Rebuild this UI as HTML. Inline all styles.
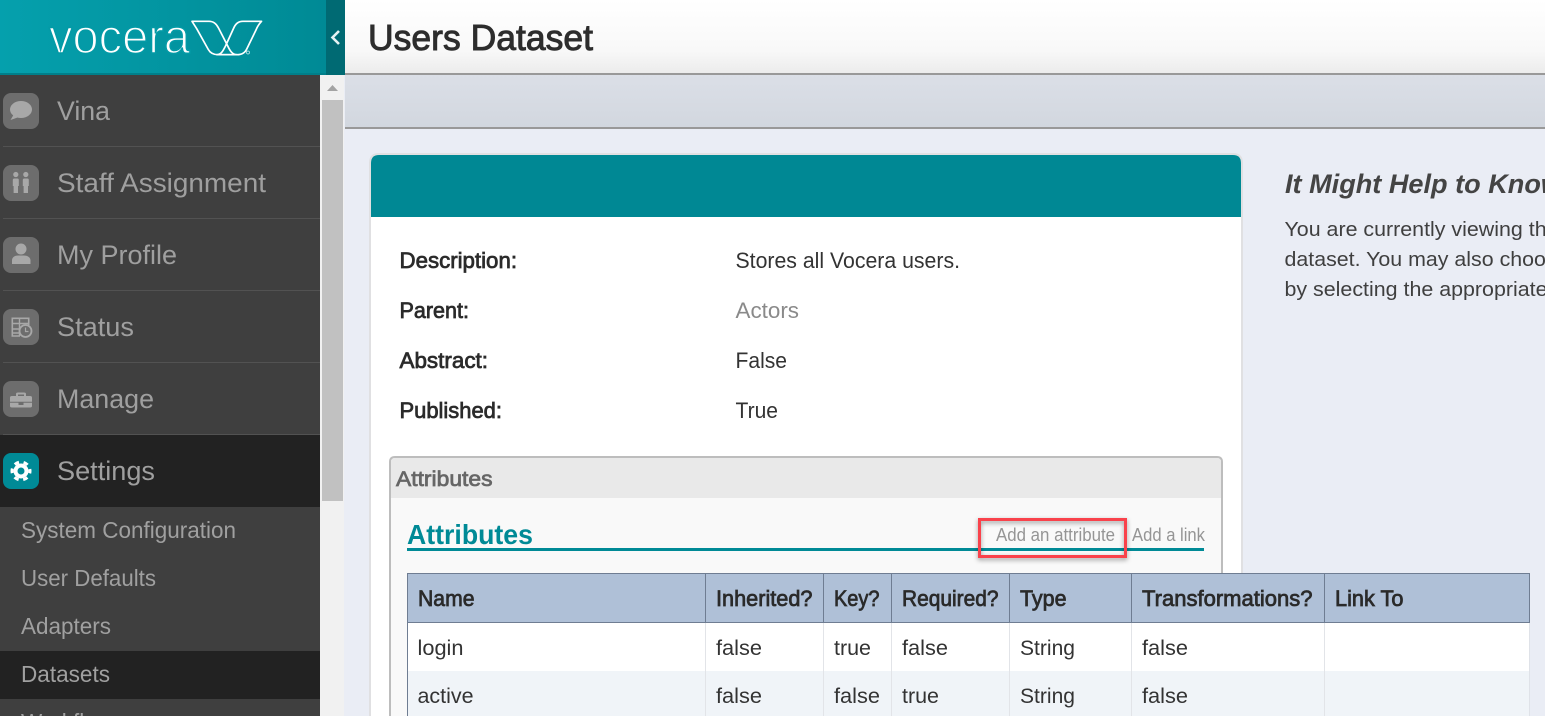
<!DOCTYPE html>
<html lang="en"><head><meta charset="utf-8"><title>Users Dataset</title>
<style>
html,body{margin:0;padding:0;width:1545px;height:716px;overflow:hidden;background:#eaedf5}
svg{display:block;position:absolute;left:0;top:0}
text{font-family:"Liberation Sans",sans-serif}
.nav{font-size:27px;fill:#9f9f9f}
.sub{font-size:23px;fill:#a0a0a0}
.lab{font-size:22px;fill:#2b2b2b;stroke:#2b2b2b;stroke-width:.75}
.val{font-size:22px;fill:#333}
.th{font-size:22px;fill:#2a2a2a;stroke:#2a2a2a;stroke-width:.75}
.td{font-size:21.5px;fill:#333}
.ln{font-size:18px;fill:#959595}
.p{font-size:20.5px;fill:#3f3f3f}
</style></head><body>
<svg width="1545" height="716" viewBox="0 0 1545 716" xmlns="http://www.w3.org/2000/svg">
<defs>
<linearGradient id="t" x1="0" x2="1" y1="0" y2="0"><stop offset="0" stop-color="#05a0ad"/><stop offset="1" stop-color="#008a95"/></linearGradient>
<linearGradient id="h" x1="0" x2="0" y1="0" y2="1"><stop offset="0" stop-color="#fff"/><stop offset=".7" stop-color="#f8f8f8"/><stop offset="1" stop-color="#ececec"/></linearGradient>
<linearGradient id="b" x1="0" x2="0" y1="0" y2="1"><stop offset="0" stop-color="#dbdfe7"/><stop offset="1" stop-color="#d2d7df"/></linearGradient>
<filter id="s" x="-10%" y="-30%" width="120%" height="170%"><feDropShadow dx="0" dy="2" stdDeviation="2.5" flood-color="#000" flood-opacity=".4"/></filter>
</defs>

<!-- main background -->
<rect width="1545" height="716" fill="#eaedf5"/>
<rect x="345" y="0" width="1200" height="73" fill="url(#h)"/>
<rect x="345" y="73" width="1200" height="2" fill="#999"/>
<rect x="345" y="75" width="1200" height="52" fill="url(#b)"/>
<rect x="345" y="127" width="1200" height="2" fill="#999"/>
<text x="368" y="50" font-size="36" fill="#2d2d2d" stroke="#2d2d2d" stroke-width=".95" textLength="225" lengthAdjust="spacingAndGlyphs">Users Dataset</text>

<!-- sidebar -->
<rect x="0" y="75" width="320" height="641" fill="#3f3f3f"/>
<rect x="0" y="435" width="320" height="72" fill="#222"/>
<rect x="0" y="651" width="320" height="48" fill="#222"/>
<g fill="#525252">
<rect x="3" y="146" width="317" height="1"/><rect x="3" y="218" width="317" height="1"/><rect x="3" y="290" width="317" height="1"/><rect x="3" y="362" width="317" height="1"/><rect x="3" y="434" width="317" height="1"/>
</g>
<!-- scrollbar -->
<rect x="320" y="75" width="25" height="641" fill="#f1f1f1"/>
<rect x="344" y="75" width="1" height="641" fill="#eaedf5"/>
<rect x="322" y="100" width="21" height="401" fill="#c1c1c1"/>
<path d="M327 91L332.500 85 338 91Z" fill="#a3a3a3"/>

<!-- header logo -->
<rect x="0" y="0" width="326" height="73" fill="url(#t)"/>
<rect x="0" y="73" width="345" height="2" fill="#007f8a"/>
<rect x="326" y="0" width="19" height="75" fill="#006a73"/>
<path d="M339 31L332.500 37.500 339 44" fill="none" stroke="#e6f2f3" stroke-width="2.600"/>
<text x="49" y="53" font-size="48" fill="#fff" stroke="#049aa6" stroke-width="1.600" textLength="141" lengthAdjust="spacingAndGlyphs">vocera</text>
<g fill="none" stroke="#fff" stroke-width="1.700" stroke-linejoin="round">
<path d="M192 21.300H209C214 21.300 216.500 24 218.500 28L227.500 45.500C230 51 232.500 54.700 237 54.700H218C214 54.700 210.500 53.500 208.300 49.500L196.700 28.700Z"/>
<path d="M261.500 21.300H243C238 21.300 235.500 24 233.500 28.500L225.500 46C223 51 221 54.700 217 54.700H237C242 54.700 245 53 247 48.500L256 30C257.500 26 259.500 23.500 261.500 21.300Z"/>
</g>
<circle cx="248" cy="52.500" r="1.500" fill="none" stroke="#cdeaec" stroke-width=".7"/>

<!-- nav icons -->
<g fill="#6d6d6d">
<rect x="3" y="93" width="36" height="36" rx="8"/><rect x="3" y="165" width="36" height="36" rx="8"/><rect x="3" y="237" width="36" height="36" rx="8"/><rect x="3" y="309" width="36" height="36" rx="8"/><rect x="3" y="381" width="36" height="36" rx="8"/>
</g>
<rect x="3" y="453" width="36" height="36" rx="8" fill="#008a96"/>
<g fill="#a8a8a8">
<ellipse cx="21" cy="109.500" rx="11" ry="8.500"/><path d="M14 114L10.500 120 19 117Z"/>
<circle cx="15.800" cy="174.500" r="2.600"/><circle cx="25.800" cy="174.500" r="2.600"/>
<path d="M12.800 180Q12.800 178.500 14.300 178.500H17.300Q18.800 178.500 18.800 180V186H18V193H13.600V186H12.800Z"/><path d="M22.800 180Q22.800 178.500 24.300 178.500H27.300Q28.800 178.500 28.800 180V186H28V193H23.600V186H22.800Z"/>
<circle cx="21" cy="249" r="5.500"/><path d="M12 264V260.500C12 257 15 255.500 18 255.500H24C27 255.500 30.500 257 30.500 260.500V264Z"/>
<path d="M10 397.500Q10 396 12 396H16V394Q16 392.500 18 392.500H24Q26 392.500 26 394V396H30Q32 396 32 397.500V401.800H10ZM18 396H24V394.500H18ZM10 402.800H18.500V405H23.500V402.800H32V406Q32 407.500 30 407.500H12Q10 407.500 10 406Z" fill-rule="evenodd"/>
</g>
<!-- status icon -->
<g fill="none" stroke="#a8a8a8">
<path d="M20 336H12.300V318.300H28.700V325" stroke-width="1.600"/>
<path d="M12.300 323.500H28.700M12.300 329H20M12.300 333H19M19.500 318.300V336" stroke-width="1.400"/>
<circle cx="25.500" cy="331" r="6" stroke-width="1.800"/>
<path d="M25.500 327.500V331.500H28.500" stroke-width="1.200"/>
</g>
<g>
<circle cx="21" cy="471" r="7.500" fill="#fff"/>
<circle cx="21" cy="471" r="9" fill="none" stroke="#fff" stroke-width="3" stroke-dasharray="4.712 4.712" stroke-dashoffset="2.356"/>
<circle cx="21" cy="471" r="3.500" fill="#008a96"/>
</g>

<!-- nav text -->
<text class="nav" x="57" y="120" textLength="53" lengthAdjust="spacingAndGlyphs">Vina</text>
<text class="nav" x="57" y="192" textLength="209" lengthAdjust="spacingAndGlyphs">Staff Assignment</text>
<text class="nav" x="57" y="264" textLength="120" lengthAdjust="spacingAndGlyphs">My Profile</text>
<text class="nav" x="57" y="336" textLength="77" lengthAdjust="spacingAndGlyphs">Status</text>
<text class="nav" x="57" y="408" textLength="97" lengthAdjust="spacingAndGlyphs">Manage</text>
<text class="nav" x="57" y="480" textLength="98" lengthAdjust="spacingAndGlyphs">Settings</text>
<text class="sub" x="21" y="538" textLength="215" lengthAdjust="spacingAndGlyphs">System Configuration</text>
<text class="sub" x="21" y="586" textLength="135" lengthAdjust="spacingAndGlyphs">User Defaults</text>
<text class="sub" x="21" y="634" textLength="90" lengthAdjust="spacingAndGlyphs">Adapters</text>
<text class="sub" x="21" y="682" textLength="89" lengthAdjust="spacingAndGlyphs">Datasets</text>
<text class="sub" x="21" y="730" textLength="92" lengthAdjust="spacingAndGlyphs">Workflow</text>

<!-- card -->
<path d="M370 730V163Q370 154 379 154H1233Q1242 154 1242 163V730Z" fill="#fff" stroke="#e0e0e2" stroke-width="2"/>
<path d="M371 217V163Q371 155 379 155H1233Q1241 155 1241 163V217Z" fill="#008894"/>
<text class="lab" x="399.500" y="268" textLength="117.500" lengthAdjust="spacingAndGlyphs">Description:</text>
<text class="lab" x="399.500" y="318" textLength="69.500" lengthAdjust="spacingAndGlyphs">Parent:</text>
<text class="lab" x="399.500" y="368" textLength="88.500" lengthAdjust="spacingAndGlyphs">Abstract:</text>
<text class="lab" x="399.500" y="418" textLength="102.500" lengthAdjust="spacingAndGlyphs">Published:</text>
<text class="val" x="735.500" y="268" textLength="224.500" lengthAdjust="spacingAndGlyphs">Stores all Vocera users.</text>
<text class="val" x="735.500" y="318" style="fill:#8a8a8a" textLength="63.500" lengthAdjust="spacingAndGlyphs">Actors</text>
<text class="val" x="735.500" y="368" textLength="51.500" lengthAdjust="spacingAndGlyphs">False</text>
<text class="val" x="735.500" y="418" textLength="42.500" lengthAdjust="spacingAndGlyphs">True</text>

<!-- panel -->
<path d="M390 730V462Q390 457 395 457H1217Q1222 457 1222 462V730Z" fill="#f9f9f9" stroke="#bdbdbd" stroke-width="2"/>
<path d="M391 498V462Q391 458 395 458H1217Q1221 458 1221 462V498Z" fill="#e9e9e9"/>
<text x="396" y="486" font-size="21.500" fill="#666" stroke="#666" stroke-width=".75" textLength="96.500" lengthAdjust="spacingAndGlyphs">Attributes</text>
<text x="407" y="544" font-size="28" font-weight="bold" fill="#008a96" textLength="126" lengthAdjust="spacingAndGlyphs">Attributes</text>
<rect x="407" y="548" width="797" height="3" fill="#008a96"/>
<text class="ln" x="996" y="541" textLength="119" lengthAdjust="spacingAndGlyphs">Add an attribute</text>
<text class="ln" x="1132" y="541" textLength="73" lengthAdjust="spacingAndGlyphs">Add a link</text>
<rect x="979.500" y="519.500" width="146" height="37" fill="none" stroke="#f9424b" stroke-width="3" filter="url(#s)"/>

<!-- table -->
<rect x="407" y="573" width="1123" height="143" fill="#fff"/>
<rect x="408" y="574" width="1121" height="48" fill="#afc0d7"/>
<rect x="408" y="671" width="1121" height="45" fill="#f0f4f8"/>
<rect x="407" y="573" width="1123" height="1" fill="#6f7d92"/>
<rect x="407" y="622" width="1123" height="1" fill="#6f7d92"/>
<rect x="407" y="573" width="1" height="143" fill="#6f7d92"/>
<rect x="1529" y="573" width="1" height="50" fill="#6f7d92"/>
<rect x="1529" y="623" width="1" height="93" fill="#dfe2e8"/>
<g fill="#6f7d92"><rect x="705" y="574" width="1" height="48"/><rect x="823" y="574" width="1" height="48"/><rect x="891" y="574" width="1" height="48"/><rect x="1009" y="574" width="1" height="48"/><rect x="1131" y="574" width="1" height="48"/><rect x="1324" y="574" width="1" height="48"/></g>
<g fill="#e2e4e8"><rect x="705" y="623" width="1" height="93"/><rect x="823" y="623" width="1" height="93"/><rect x="891" y="623" width="1" height="93"/><rect x="1009" y="623" width="1" height="93"/><rect x="1131" y="623" width="1" height="93"/><rect x="1324" y="623" width="1" height="93"/></g>
<text class="th" x="418" y="606" textLength="56.500" lengthAdjust="spacingAndGlyphs">Name</text>
<text class="th" x="716" y="606" textLength="96.500" lengthAdjust="spacingAndGlyphs">Inherited?</text>
<text class="th" x="834" y="606" textLength="45.500" lengthAdjust="spacingAndGlyphs">Key?</text>
<text class="th" x="902" y="606" textLength="96.500" lengthAdjust="spacingAndGlyphs">Required?</text>
<text class="th" x="1020" y="606" textLength="46.500" lengthAdjust="spacingAndGlyphs">Type</text>
<text class="th" x="1142" y="606" textLength="170.500" lengthAdjust="spacingAndGlyphs">Transformations?</text>
<text class="th" x="1335" y="606" textLength="68.500" lengthAdjust="spacingAndGlyphs">Link To</text>
<text class="td" x="417.500" y="655" textLength="46" lengthAdjust="spacingAndGlyphs">login</text>
<text class="td" x="716" y="655" textLength="46" lengthAdjust="spacingAndGlyphs">false</text>
<text class="td" x="834" y="655" textLength="37" lengthAdjust="spacingAndGlyphs">true</text>
<text class="td" x="902" y="655" textLength="46" lengthAdjust="spacingAndGlyphs">false</text>
<text class="td" x="1020" y="655" textLength="55" lengthAdjust="spacingAndGlyphs">String</text>
<text class="td" x="1142" y="655" textLength="46" lengthAdjust="spacingAndGlyphs">false</text>
<text class="td" x="417.500" y="703" textLength="56" lengthAdjust="spacingAndGlyphs">active</text>
<text class="td" x="716" y="703" textLength="46" lengthAdjust="spacingAndGlyphs">false</text>
<text class="td" x="834" y="703" textLength="46" lengthAdjust="spacingAndGlyphs">false</text>
<text class="td" x="902" y="703" textLength="37" lengthAdjust="spacingAndGlyphs">true</text>
<text class="td" x="1020" y="703" textLength="55" lengthAdjust="spacingAndGlyphs">String</text>
<text class="td" x="1142" y="703" textLength="46" lengthAdjust="spacingAndGlyphs">false</text>

<!-- help -->
<text x="1285" y="193" font-size="27" font-weight="bold" font-style="italic" fill="#444" textLength="277" lengthAdjust="spacingAndGlyphs">It Might Help to Know</text>
<text class="p" x="1284.500" y="236" textLength="274" lengthAdjust="spacingAndGlyphs">You are currently viewing the</text>
<text class="p" x="1284.500" y="266" textLength="284" lengthAdjust="spacingAndGlyphs">dataset. You may also choose</text>
<text class="p" x="1284.500" y="296" textLength="263" lengthAdjust="spacingAndGlyphs">by selecting the appropriate</text>
</svg>
</body></html>
